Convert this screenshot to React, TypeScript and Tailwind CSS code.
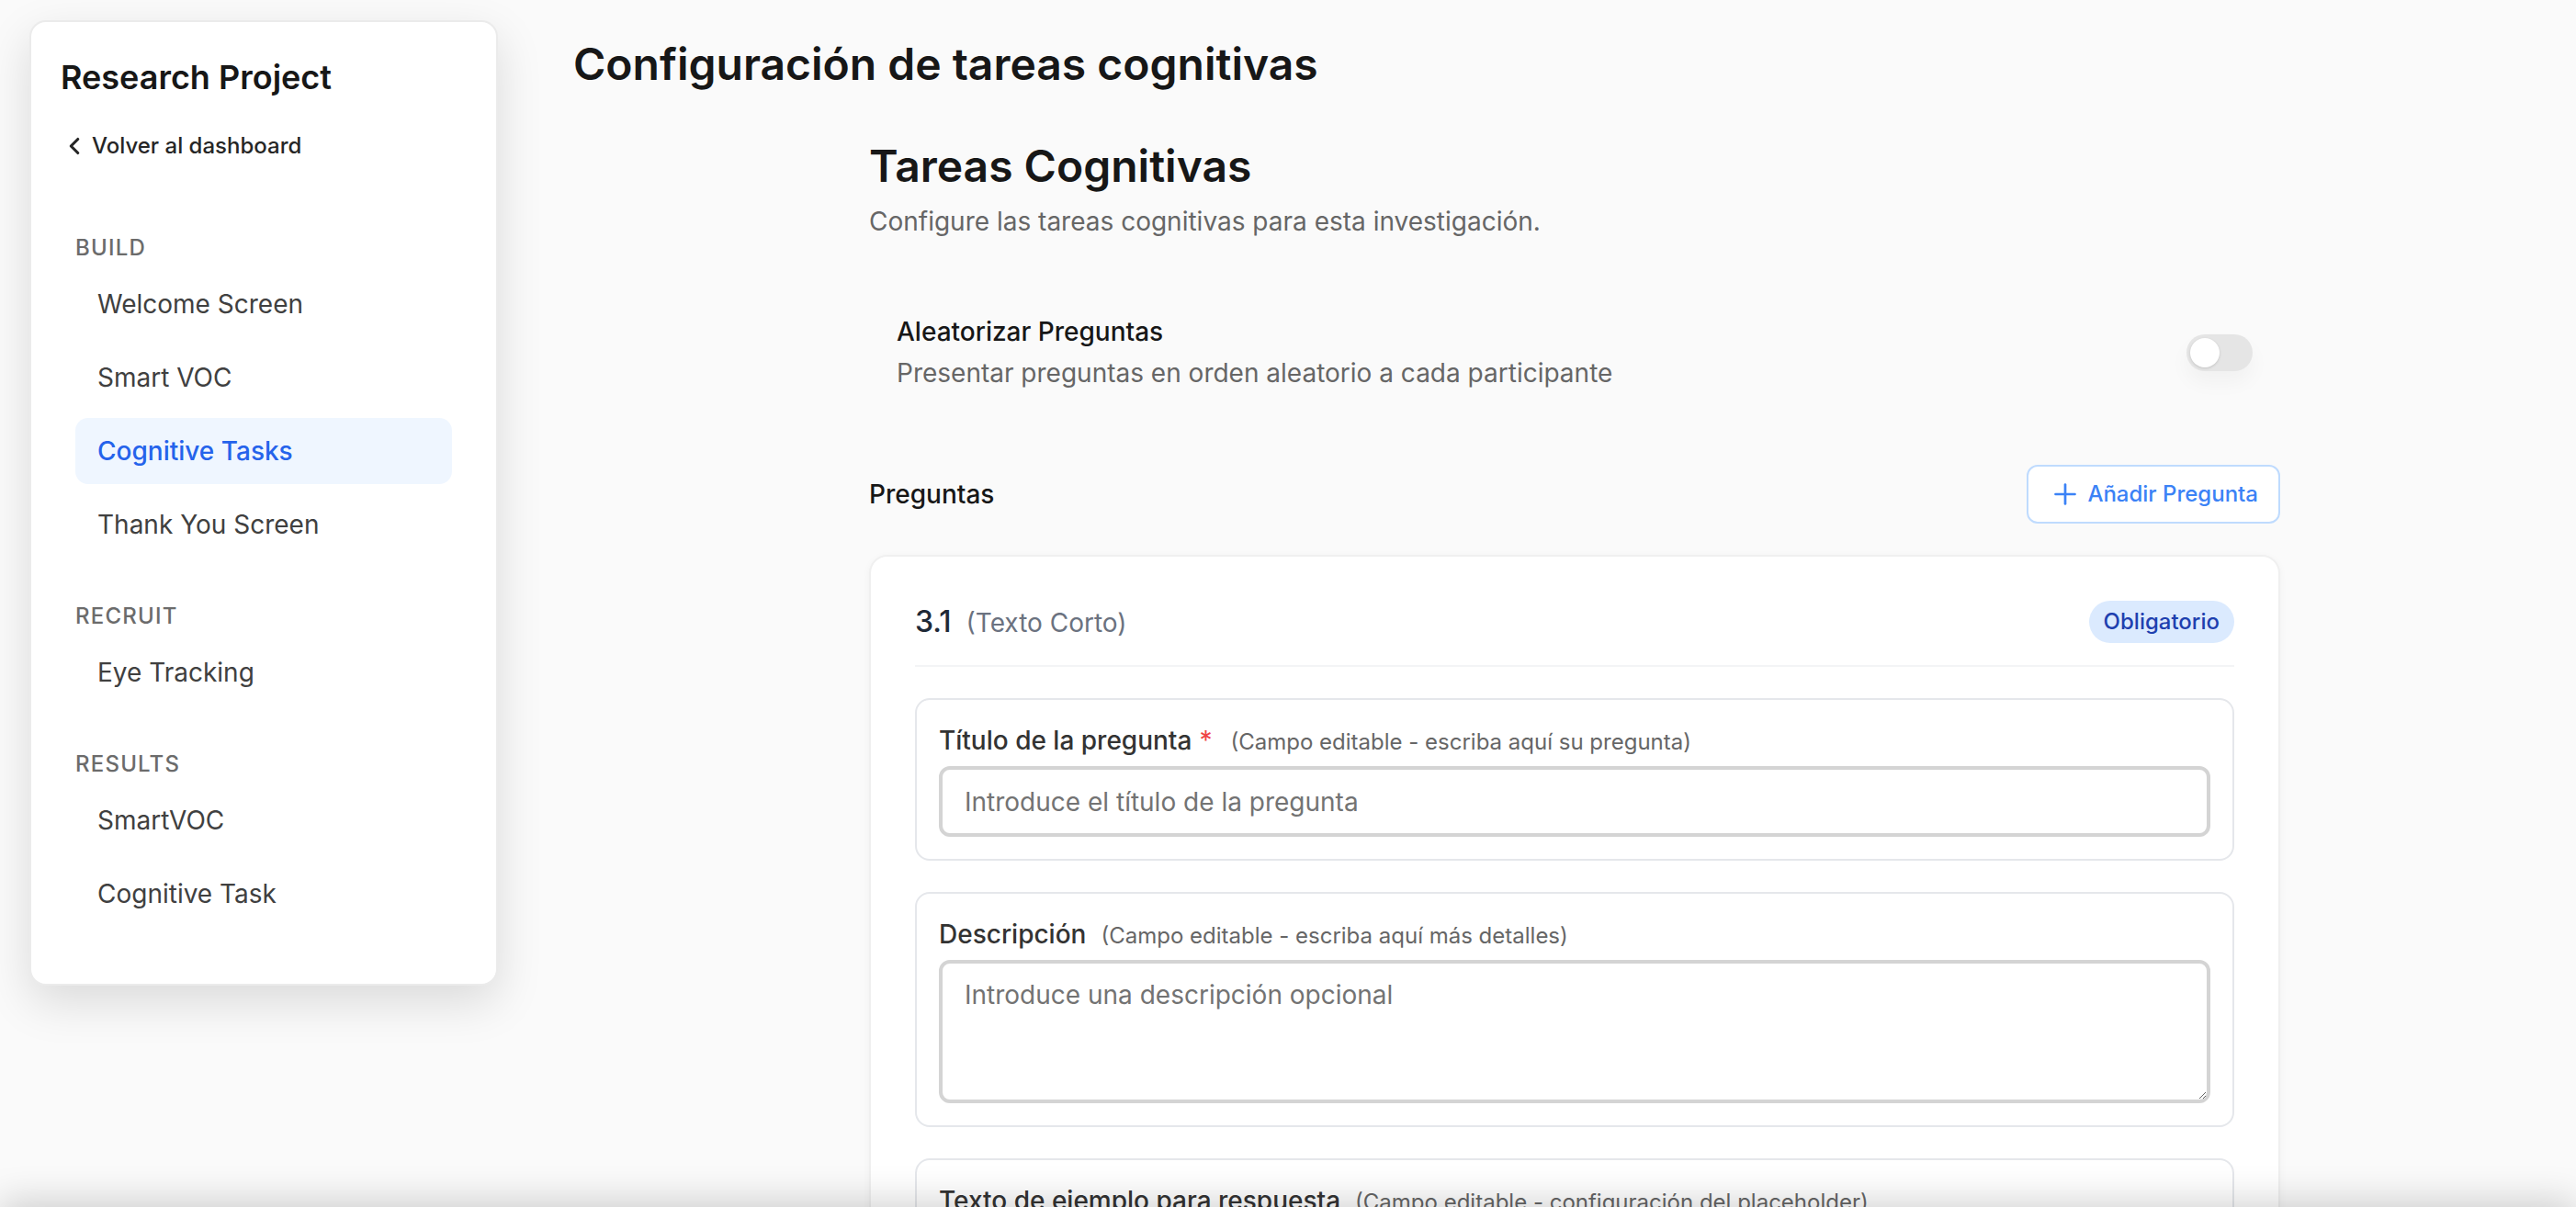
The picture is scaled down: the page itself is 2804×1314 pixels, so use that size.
import { ChevronLeft, Plus } from 'lucide-react'

const sections = [
  { title: 'Build', items: ['Welcome Screen', 'Smart VOC', 'Cognitive Tasks', 'Thank You Screen'] },
  { title: 'Recruit', items: ['Eye Tracking'] },
  { title: 'Results', items: ['SmartVOC', 'Cognitive Task'] },
]

const active = 'Cognitive Tasks'

function Sidebar() {
  return (
    <aside className="w-[576px] shrink-0 pl-8 pr-[34px] pt-[22px]">
      <div className="rounded-[18px] border-2 border-[#ebebeb] bg-white pt-8 pb-[62px] shadow-[0_18px_50px_rgba(0,0,0,0.13)]">
        <div className="px-8">
          <h2 className="text-[36px] leading-[56px] font-semibold text-[#171717]">Research Project</h2>
          <button className="mt-[31px] flex items-center gap-1 text-[24px] leading-[32px] font-medium text-[#262626]">
            <ChevronLeft size={30} strokeWidth={2.5} />
            Volver al dashboard
          </button>
        </div>

        <nav className="mt-[79px] px-12">
          {sections.map((section, i) => (
            <div key={section.title} className={i > 0 ? 'mt-12' : ''}>
              <p className="mb-[9px] text-[24px] leading-[32px] font-medium uppercase tracking-wider text-[#6b6b6b]">
                {section.title}
              </p>
              <div className="flex flex-col gap-2">
                {section.items.map((item) => (
                  <a
                    key={item}
                    className={
                      item === active
                        ? 'rounded-[14px] bg-[#eff6ff] px-6 py-4 text-[28px] leading-[40px] font-medium text-[#2563eb]'
                        : 'rounded-[14px] px-6 py-4 text-[28px] leading-[40px] text-[#404040]'
                    }
                  >
                    {item}
                  </a>
                ))}
              </div>
            </div>
          ))}
        </nav>
      </div>
    </aside>
  )
}

function FieldBox({
  label,
  hint,
  required,
  children,
}: {
  label: string
  hint: string
  required?: boolean
  children?: React.ReactNode
}) {
  return (
    <div className="rounded-[16px] border-2 border-[#e5e7eb] bg-white p-6">
      <div className="flex items-baseline">
        <span className="text-[28px] leading-[40px] font-medium text-[#333333]">{label}</span>
        {required && <span className="ml-2 text-[28px] leading-[40px] text-[#ef4444]">*</span>}
        <span className={required ? 'ml-[20px] text-[24px] text-[#666666]' : 'ml-4 text-[24px] text-[#666666]'}>
          {hint}
        </span>
      </div>
      {children}
    </div>
  )
}

export default function App() {
  return (
    <div className="flex h-screen overflow-hidden bg-[#fafafa] [font-family:Inter,'Noto_Sans',sans-serif]">
      <Sidebar />

      <main className="min-w-0 flex-1 pl-12 pt-[38px]">
        <h1 className="text-[48px] leading-[64px] font-semibold text-[#171717]">Configuración de tareas cognitivas</h1>

        <div className="mx-auto mt-[47px] w-[1536px]">
          <h2 className="text-[48px] leading-[64px] font-semibold text-[#171717]">Tareas Cognitivas</h2>
          <p className="mt-2 text-[28px] leading-[40px] text-[#666666]">
            Configure las tareas cognitivas para esta investigación.
          </p>

          {/* Randomize toggle */}
          <div className="mt-12 flex items-center justify-between px-[30px] py-8">
            <div>
              <p className="text-[28px] leading-[40px] font-medium text-[#171717]">Aleatorizar Preguntas</p>
              <p className="mt-[5px] text-[28px] leading-[40px] text-[#666666]">
                Presentar preguntas en orden aleatorio a cada participante
              </p>
            </div>
            <div className="flex h-10 w-[72px] items-center rounded-full bg-[#e5e5e5] p-1 shadow-[0_12px_22px_rgba(0,0,0,0.04)]">
              <div className="h-8 w-8 rounded-full bg-white shadow-[0_1px_3px_rgba(0,0,0,0.15)]" />
            </div>
          </div>

          <div className="mt-12 flex items-center justify-between">
            <p className="text-[28px] leading-[40px] font-medium text-[#171717]">Preguntas</p>
            <button className="flex items-center gap-[6px] rounded-[12px] border-2 border-[#bfdbfe] bg-white px-[22px] py-[12px] text-[24px] leading-[32px] font-medium text-[#3b82f6]">
              <Plus size={36} strokeWidth={1.8} />
              Añadir Pregunta
            </button>
          </div>

          {/* Question card */}
          <div className="mt-[34px] rounded-[20px] border-2 border-[#f0f0f0] bg-white p-12 shadow-[0_2px_8px_rgba(0,0,0,0.04)]">
            <div className="flex items-center justify-between border-b-2 border-[#f3f4f6] pb-6">
              <div className="flex items-baseline">
                <span className="text-[32px] leading-[46px] font-medium text-[#1f2937]">3.1</span>
                <span className="ml-4 text-[28px] text-[#6b7280]">(Texto Corto)</span>
              </div>
              <span className="rounded-full bg-[#dbeafe] px-4 py-[7px] text-[24px] leading-[32px] font-medium text-[#1e40af]">
                Obligatorio
              </span>
            </div>

            <div className="mt-[34px] flex flex-col gap-[34px]">
              <FieldBox label="Título de la pregunta" hint="(Campo editable - escriba aquí su pregunta)" required>
                <input
                  className="mt-2 h-[77px] w-full rounded-[12px] border-4 border-[#d4d4d4] bg-white px-6 text-[28px] text-[#171717] outline-none placeholder:text-[#737373]"
                  placeholder="Introduce el título de la pregunta"
                />
              </FieldBox>

              <FieldBox label="Descripción" hint="(Campo editable - escriba aquí más detalles)">
                <textarea
                  className="mt-2 block h-[156px] w-full resize-y rounded-[12px] border-4 border-[#d4d4d4] bg-white px-6 py-[14px] text-[28px] leading-[40px] text-[#171717] outline-none placeholder:text-[#737373]"
                  placeholder="Introduce una descripción opcional"
                />
              </FieldBox>

              <FieldBox label="Texto de ejemplo para respuesta" hint="(Campo editable - configuración del placeholder)">
                <input
                  className="mt-2 h-[77px] w-full rounded-[12px] border-4 border-[#d4d4d4] bg-white px-6 text-[28px] outline-none placeholder:text-[#737373]"
                  placeholder="Introduce un texto de ejemplo"
                />
              </FieldBox>
            </div>
          </div>
        </div>
      </main>

      {/* shadow from the bar just below the viewport */}
      <div className="pointer-events-none fixed inset-x-0 top-full h-24 shadow-[0_-6px_40px_rgba(0,0,0,0.18)]" />
    </div>
  )
}
